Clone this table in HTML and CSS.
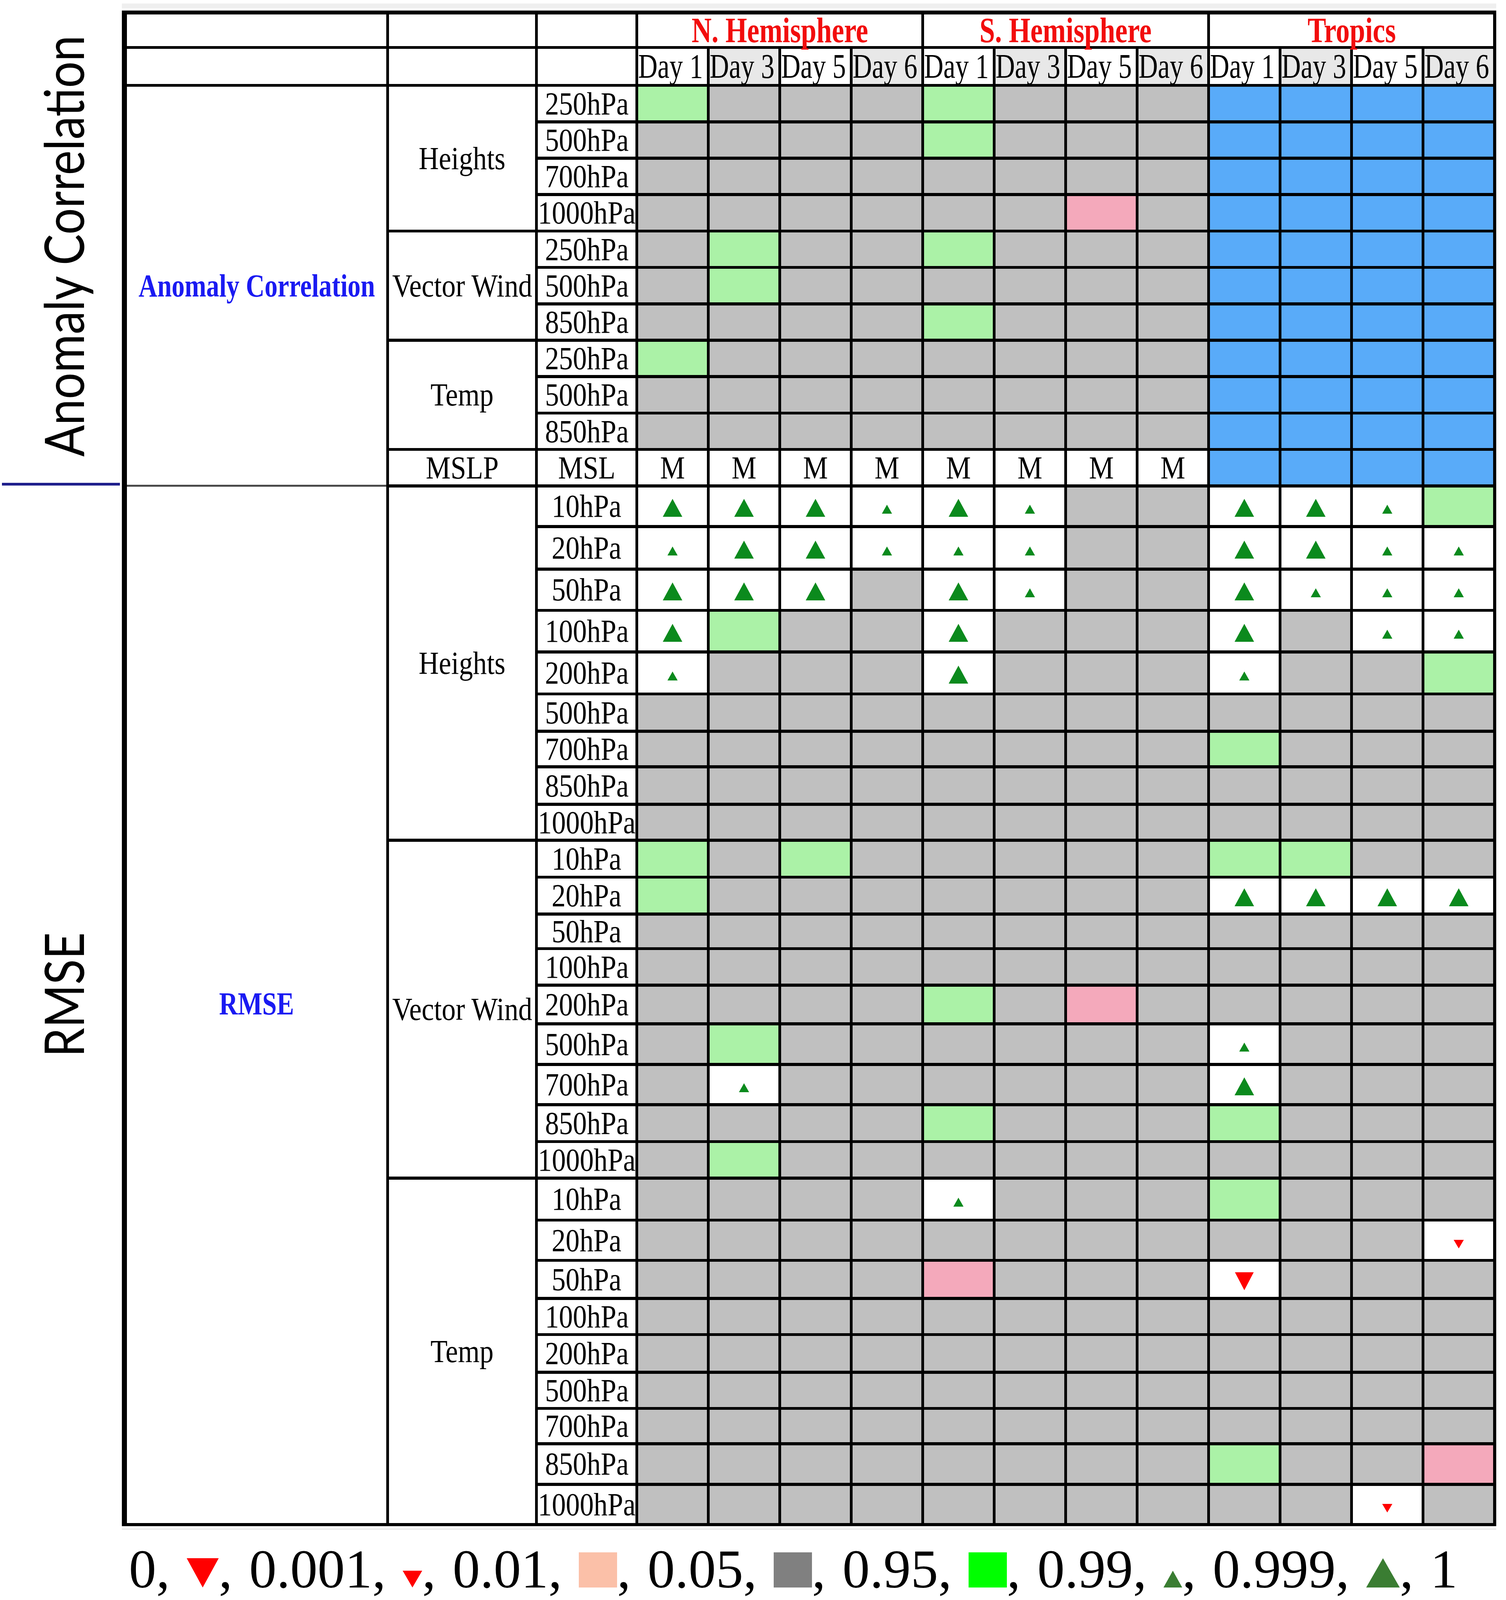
FILE: index.html
```html
<!DOCTYPE html>
<html lang="en">
<head>
<meta charset="utf-8">
<title>Anomaly Correlation and RMSE scorecard</title>
<link rel="stylesheet" href="styles.css">
</head>
<body>
<div class="frame">
<div class="page">
  <div class="side">
    <svg class="vsvg vsvg-ac" viewBox="0 0 312 1438" preserveAspectRatio="none">
      <text class="vtxt" x="-733" y="215" text-anchor="middle" transform="rotate(-90)">Anomaly Correlation</text>
    </svg>
    <div class="rule"></div>
    <svg class="vsvg vsvg-rm" viewBox="0 0 312 3034" preserveAspectRatio="none">
      <text class="vtxt" x="-1517" y="215" text-anchor="middle" transform="rotate(-90)">RMSE</text>
    </svg>
  </div>
  <div class="sheet">
    <div class="band"></div>
    <div class="tbl">
      <!-- header row 1 -->
      <div></div><div></div><div></div>
      <div class="grp"><span class="t">N. Hemisphere</span></div>
      <div class="grp"><span class="t">S. Hemisphere</span></div>
      <div class="grp"><span class="t">Tropics</span></div>
      <!-- header row 2 -->
      <div></div><div></div><div></div>
      <div class="day"><span class="t">Day 1</span></div>
      <div class="day dg"><span class="t">Day 3</span></div>
      <div class="day"><span class="t">Day 5</span></div>
      <div class="day dg"><span class="t">Day 6</span></div>
      <div class="day"><span class="t">Day 1</span></div>
      <div class="day dg"><span class="t">Day 3</span></div>
      <div class="day"><span class="t">Day 5</span></div>
      <div class="day dg"><span class="t">Day 6</span></div>
      <div class="day"><span class="t">Day 1</span></div>
      <div class="day dg"><span class="t">Day 3</span></div>
      <div class="day"><span class="t">Day 5</span></div>
      <div class="day dg"><span class="t">Day 6</span></div>

      <!-- Anomaly correlation -->
      <div class="cat cat-ac"><span class="t">Anomaly Correlation</span></div>
      <div class="var sp4"><span class="t">Heights</span></div>
      <div class="lv"><span class="t">250hPa</span></div>
      <div class="G"></div><div class="g"></div><div class="g"></div><div class="g"></div>
      <div class="G"></div><div class="g"></div><div class="g"></div><div class="g"></div>
      <div class="b"></div><div class="b"></div><div class="b"></div><div class="b"></div>

      <div class="lv"><span class="t">500hPa</span></div>
      <div class="g"></div><div class="g"></div><div class="g"></div><div class="g"></div>
      <div class="G"></div><div class="g"></div><div class="g"></div><div class="g"></div>
      <div class="b"></div><div class="b"></div><div class="b"></div><div class="b"></div>

      <div class="lv"><span class="t">700hPa</span></div>
      <div class="g"></div><div class="g"></div><div class="g"></div><div class="g"></div>
      <div class="g"></div><div class="g"></div><div class="g"></div><div class="g"></div>
      <div class="b"></div><div class="b"></div><div class="b"></div><div class="b"></div>

      <div class="lv"><span class="t">1000hPa</span></div>
      <div class="g"></div><div class="g"></div><div class="g"></div><div class="g"></div>
      <div class="g"></div><div class="g"></div><div class="p"></div><div class="g"></div>
      <div class="b"></div><div class="b"></div><div class="b"></div><div class="b"></div>

      <div class="var sp3"><span class="t">Vector Wind</span></div>
      <div class="lv"><span class="t">250hPa</span></div>
      <div class="g"></div><div class="G"></div><div class="g"></div><div class="g"></div>
      <div class="G"></div><div class="g"></div><div class="g"></div><div class="g"></div>
      <div class="b"></div><div class="b"></div><div class="b"></div><div class="b"></div>

      <div class="lv"><span class="t">500hPa</span></div>
      <div class="g"></div><div class="G"></div><div class="g"></div><div class="g"></div>
      <div class="g"></div><div class="g"></div><div class="g"></div><div class="g"></div>
      <div class="b"></div><div class="b"></div><div class="b"></div><div class="b"></div>

      <div class="lv"><span class="t">850hPa</span></div>
      <div class="g"></div><div class="g"></div><div class="g"></div><div class="g"></div>
      <div class="G"></div><div class="g"></div><div class="g"></div><div class="g"></div>
      <div class="b"></div><div class="b"></div><div class="b"></div><div class="b"></div>

      <div class="var sp3"><span class="t">Temp</span></div>
      <div class="lv"><span class="t">250hPa</span></div>
      <div class="G"></div><div class="g"></div><div class="g"></div><div class="g"></div>
      <div class="g"></div><div class="g"></div><div class="g"></div><div class="g"></div>
      <div class="b"></div><div class="b"></div><div class="b"></div><div class="b"></div>

      <div class="lv"><span class="t">500hPa</span></div>
      <div class="g"></div><div class="g"></div><div class="g"></div><div class="g"></div>
      <div class="g"></div><div class="g"></div><div class="g"></div><div class="g"></div>
      <div class="b"></div><div class="b"></div><div class="b"></div><div class="b"></div>

      <div class="lv"><span class="t">850hPa</span></div>
      <div class="g"></div><div class="g"></div><div class="g"></div><div class="g"></div>
      <div class="g"></div><div class="g"></div><div class="g"></div><div class="g"></div>
      <div class="b"></div><div class="b"></div><div class="b"></div><div class="b"></div>

      <div class="var"><span class="t">MSLP</span></div>
      <div class="lv"><span class="t">MSL</span></div>
      <div><span class="t">M</span></div><div><span class="t">M</span></div><div><span class="t">M</span></div><div><span class="t">M</span></div>
      <div><span class="t">M</span></div><div><span class="t">M</span></div><div><span class="t">M</span></div><div><span class="t">M</span></div>
      <div class="b"></div><div class="b"></div><div class="b"></div><div class="b"></div>

      <!-- RMSE -->
      <div class="cat cat-rm"><span class="t">RMSE</span></div>
      <div class="var sp9"><span class="t">Heights</span></div>
      <div class="lv"><span class="t">10hPa</span></div>
      <div><i class="up"></i></div><div><i class="up"></i></div><div><i class="up"></i></div><div><i class="up s"></i></div>
      <div><i class="up"></i></div><div><i class="up s"></i></div><div class="g"></div><div class="g"></div>
      <div><i class="up"></i></div><div><i class="up"></i></div><div><i class="up s"></i></div><div class="G"></div>

      <div class="lv"><span class="t">20hPa</span></div>
      <div><i class="up s"></i></div><div><i class="up"></i></div><div><i class="up"></i></div><div><i class="up s"></i></div>
      <div><i class="up s"></i></div><div><i class="up s"></i></div><div class="g"></div><div class="g"></div>
      <div><i class="up"></i></div><div><i class="up"></i></div><div><i class="up s"></i></div><div><i class="up s"></i></div>

      <div class="lv"><span class="t">50hPa</span></div>
      <div><i class="up"></i></div><div><i class="up"></i></div><div><i class="up"></i></div><div class="g"></div>
      <div><i class="up"></i></div><div><i class="up s"></i></div><div class="g"></div><div class="g"></div>
      <div><i class="up"></i></div><div><i class="up s"></i></div><div><i class="up s"></i></div><div><i class="up s"></i></div>

      <div class="lv"><span class="t">100hPa</span></div>
      <div><i class="up"></i></div><div class="G"></div><div class="g"></div><div class="g"></div>
      <div><i class="up"></i></div><div class="g"></div><div class="g"></div><div class="g"></div>
      <div><i class="up"></i></div><div class="g"></div><div><i class="up s"></i></div><div><i class="up s"></i></div>

      <div class="lv"><span class="t">200hPa</span></div>
      <div><i class="up s"></i></div><div class="g"></div><div class="g"></div><div class="g"></div>
      <div><i class="up"></i></div><div class="g"></div><div class="g"></div><div class="g"></div>
      <div><i class="up s"></i></div><div class="g"></div><div class="g"></div><div class="G"></div>

      <div class="lv"><span class="t">500hPa</span></div>
      <div class="g"></div><div class="g"></div><div class="g"></div><div class="g"></div>
      <div class="g"></div><div class="g"></div><div class="g"></div><div class="g"></div>
      <div class="g"></div><div class="g"></div><div class="g"></div><div class="g"></div>

      <div class="lv"><span class="t">700hPa</span></div>
      <div class="g"></div><div class="g"></div><div class="g"></div><div class="g"></div>
      <div class="g"></div><div class="g"></div><div class="g"></div><div class="g"></div>
      <div class="G"></div><div class="g"></div><div class="g"></div><div class="g"></div>

      <div class="lv"><span class="t">850hPa</span></div>
      <div class="g"></div><div class="g"></div><div class="g"></div><div class="g"></div>
      <div class="g"></div><div class="g"></div><div class="g"></div><div class="g"></div>
      <div class="g"></div><div class="g"></div><div class="g"></div><div class="g"></div>

      <div class="lv"><span class="t">1000hPa</span></div>
      <div class="g"></div><div class="g"></div><div class="g"></div><div class="g"></div>
      <div class="g"></div><div class="g"></div><div class="g"></div><div class="g"></div>
      <div class="g"></div><div class="g"></div><div class="g"></div><div class="g"></div>

      <div class="var sp9"><span class="t">Vector Wind</span></div>
      <div class="lv"><span class="t">10hPa</span></div>
      <div class="G"></div><div class="g"></div><div class="G"></div><div class="g"></div>
      <div class="g"></div><div class="g"></div><div class="g"></div><div class="g"></div>
      <div class="G"></div><div class="G"></div><div class="g"></div><div class="g"></div>

      <div class="lv"><span class="t">20hPa</span></div>
      <div class="G"></div><div class="g"></div><div class="g"></div><div class="g"></div>
      <div class="g"></div><div class="g"></div><div class="g"></div><div class="g"></div>
      <div><i class="up"></i></div><div><i class="up"></i></div><div><i class="up"></i></div><div><i class="up"></i></div>

      <div class="lv"><span class="t">50hPa</span></div>
      <div class="g"></div><div class="g"></div><div class="g"></div><div class="g"></div>
      <div class="g"></div><div class="g"></div><div class="g"></div><div class="g"></div>
      <div class="g"></div><div class="g"></div><div class="g"></div><div class="g"></div>

      <div class="lv"><span class="t">100hPa</span></div>
      <div class="g"></div><div class="g"></div><div class="g"></div><div class="g"></div>
      <div class="g"></div><div class="g"></div><div class="g"></div><div class="g"></div>
      <div class="g"></div><div class="g"></div><div class="g"></div><div class="g"></div>

      <div class="lv"><span class="t">200hPa</span></div>
      <div class="g"></div><div class="g"></div><div class="g"></div><div class="g"></div>
      <div class="G"></div><div class="g"></div><div class="p"></div><div class="g"></div>
      <div class="g"></div><div class="g"></div><div class="g"></div><div class="g"></div>

      <div class="lv"><span class="t">500hPa</span></div>
      <div class="g"></div><div class="G"></div><div class="g"></div><div class="g"></div>
      <div class="g"></div><div class="g"></div><div class="g"></div><div class="g"></div>
      <div><i class="up s"></i></div><div class="g"></div><div class="g"></div><div class="g"></div>

      <div class="lv"><span class="t">700hPa</span></div>
      <div class="g"></div><div><i class="up s"></i></div><div class="g"></div><div class="g"></div>
      <div class="g"></div><div class="g"></div><div class="g"></div><div class="g"></div>
      <div><i class="up"></i></div><div class="g"></div><div class="g"></div><div class="g"></div>

      <div class="lv"><span class="t">850hPa</span></div>
      <div class="g"></div><div class="g"></div><div class="g"></div><div class="g"></div>
      <div class="G"></div><div class="g"></div><div class="g"></div><div class="g"></div>
      <div class="G"></div><div class="g"></div><div class="g"></div><div class="g"></div>

      <div class="lv"><span class="t">1000hPa</span></div>
      <div class="g"></div><div class="G"></div><div class="g"></div><div class="g"></div>
      <div class="g"></div><div class="g"></div><div class="g"></div><div class="g"></div>
      <div class="g"></div><div class="g"></div><div class="g"></div><div class="g"></div>

      <div class="var sp9"><span class="t">Temp</span></div>
      <div class="lv"><span class="t">10hPa</span></div>
      <div class="g"></div><div class="g"></div><div class="g"></div><div class="g"></div>
      <div><i class="up s"></i></div><div class="g"></div><div class="g"></div><div class="g"></div>
      <div class="G"></div><div class="g"></div><div class="g"></div><div class="g"></div>

      <div class="lv"><span class="t">20hPa</span></div>
      <div class="g"></div><div class="g"></div><div class="g"></div><div class="g"></div>
      <div class="g"></div><div class="g"></div><div class="g"></div><div class="g"></div>
      <div class="g"></div><div class="g"></div><div class="g"></div><div><i class="dn s"></i></div>

      <div class="lv"><span class="t">50hPa</span></div>
      <div class="g"></div><div class="g"></div><div class="g"></div><div class="g"></div>
      <div class="p"></div><div class="g"></div><div class="g"></div><div class="g"></div>
      <div><i class="dn"></i></div><div class="g"></div><div class="g"></div><div class="g"></div>

      <div class="lv"><span class="t">100hPa</span></div>
      <div class="g"></div><div class="g"></div><div class="g"></div><div class="g"></div>
      <div class="g"></div><div class="g"></div><div class="g"></div><div class="g"></div>
      <div class="g"></div><div class="g"></div><div class="g"></div><div class="g"></div>

      <div class="lv"><span class="t">200hPa</span></div>
      <div class="g"></div><div class="g"></div><div class="g"></div><div class="g"></div>
      <div class="g"></div><div class="g"></div><div class="g"></div><div class="g"></div>
      <div class="g"></div><div class="g"></div><div class="g"></div><div class="g"></div>

      <div class="lv"><span class="t">500hPa</span></div>
      <div class="g"></div><div class="g"></div><div class="g"></div><div class="g"></div>
      <div class="g"></div><div class="g"></div><div class="g"></div><div class="g"></div>
      <div class="g"></div><div class="g"></div><div class="g"></div><div class="g"></div>

      <div class="lv"><span class="t">700hPa</span></div>
      <div class="g"></div><div class="g"></div><div class="g"></div><div class="g"></div>
      <div class="g"></div><div class="g"></div><div class="g"></div><div class="g"></div>
      <div class="g"></div><div class="g"></div><div class="g"></div><div class="g"></div>

      <div class="lv"><span class="t">850hPa</span></div>
      <div class="g"></div><div class="g"></div><div class="g"></div><div class="g"></div>
      <div class="g"></div><div class="g"></div><div class="g"></div><div class="g"></div>
      <div class="G"></div><div class="g"></div><div class="g"></div><div class="p"></div>

      <div class="lv"><span class="t">1000hPa</span></div>
      <div class="g"></div><div class="g"></div><div class="g"></div><div class="g"></div>
      <div class="g"></div><div class="g"></div><div class="g"></div><div class="g"></div>
      <div class="g"></div><div class="g"></div><div><i class="dn s"></i></div><div class="g"></div>
    </div>
    <div class="footline"></div>
  </div>
</div>
<div class="legend">0, <i class="lg dn-big"></i>, 0.001, <i class="lg dn-small"></i>, 0.01, <i class="lg sq peach"></i>, 0.05, <i class="lg sq gray"></i>, 0.95, <i class="lg sq lime"></i>, 0.99, <i class="lg up-small"></i>, 0.999, <i class="lg up-big"></i>, 1</div>
</div>
</body>
</html>
```
FILE: styles.css
```css
/* one vertical unit = 1/4767 of the window height, so the sheet fills the window */
:root {
  --v: calc(100vh / 4767);
}

html, body {
  margin: 0;
  padding: 0;
  background: #ffffff;
}

body {
  font-family: "Liberation Serif", "Times New Roman", serif;
  color: #000;
}

.frame {
  width: 3856px;
  height: 100vh;
  overflow: hidden;
}

.page {
  display: flex;
  align-items: flex-start;
}

/* left side rotated labels */
.side {
  width: 312px;
  flex: none;
  display: flex;
  flex-direction: column;
}

.vsvg {
  display: block;
  width: 312px;
  overflow: visible;
}

.vsvg-ac {
  height: calc(1438 * var(--v));
}

.vsvg-rm {
  height: calc(3034 * var(--v));
}

.vtxt {
  font-family: Lato, "Open Sans", sans-serif;
  font-size: 139px;
  fill: #000;
}

.rule {
  margin-left: 5px;
  width: 302px;
  height: calc(9 * var(--v));
  background: #1f1f8c;
}

/* table sheet */
.sheet {
  flex: none;
  padding-top: calc(10 * var(--v));
}

.band {
  height: calc(14 * var(--v));
  background: #efefef;
  margin-bottom: calc(8 * var(--v));
}

.footline {
  height: calc(3 * var(--v));
  margin-top: calc(8 * var(--v));
  background: #e6e6e6;
}

.tbl {
  display: grid;
  grid-template-columns: 664px 374px 250px repeat(12, 176px);
  grid-template-rows:
    calc(94 * var(--v)) calc(104 * var(--v))
    repeat(11, calc(99.5 * var(--v)))
    calc(112 * var(--v)) calc(118 * var(--v)) calc(114 * var(--v))
    calc(115 * var(--v)) calc(116 * var(--v)) calc(102 * var(--v))
    calc(97 * var(--v)) calc(103 * var(--v)) calc(98 * var(--v))
    calc(101 * var(--v)) calc(101 * var(--v)) calc(94 * var(--v))
    calc(100 * var(--v)) calc(106 * var(--v)) calc(112 * var(--v))
    calc(111 * var(--v)) calc(101 * var(--v)) calc(100 * var(--v))
    calc(116 * var(--v)) calc(111 * var(--v)) calc(104 * var(--v))
    calc(99 * var(--v)) calc(103 * var(--v)) calc(99 * var(--v))
    calc(96 * var(--v)) calc(112 * var(--v)) calc(111 * var(--v));
  column-gap: 7px;
  row-gap: calc(9 * var(--v));
  padding: calc(11 * var(--v)) 8px calc(9 * var(--v)) 13px;
  background: #000;
}

.tbl > div {
  background: #ffffff;
  display: flex;
  align-items: center;
  justify-content: center;
  min-width: 0;
  font-size: 83px;
  line-height: 0.9;
}

.t {
  display: inline-block;
  white-space: nowrap;
  transform: scaleX(0.86);
  transform-origin: center center;
}

/* group headers */
.tbl > .grp {
  grid-column: span 4;
  color: #f20d0d;
  font-weight: bold;
  font-size: 91px;
  line-height: 0.85;
}

.grp .t {
  transform: scaleX(0.78);
}

/* day headers */
.tbl > .day {
  justify-content: flex-start;
  font-size: 88px;
}

.tbl > .dg {
  background: #e8e8e8;
}

.day .t {
  transform: scaleX(0.78);
  transform-origin: left center;
}

/* category column */
.tbl > .cat {
  color: #1a1af2;
  font-weight: bold;
}

.cat .t {
  transform: scaleX(0.8);
}

.cat-ac {
  grid-row: span 11;
}

.tbl > .cat-rm {
  grid-row: span 27;
  margin-top: calc(-9 * var(--v));
  background:
    linear-gradient(#ffffff 0 1px, #4a4a4a 1px 6px, #ffffff 6px 8px) top / 100% 8px no-repeat,
    #ffffff;
}

.sp3 { grid-row: span 3; }
.sp4 { grid-row: span 4; }
.sp9 { grid-row: span 9; }

/* cell colours */
.tbl > .g { background: #c0c0c0; }
.tbl > .G { background: #abf2a7; }
.tbl > .p { background: #f4a9bb; }
.tbl > .b { background: #59abf9; }

/* significance triangles */
.up {
  display: block;
  width: 0;
  height: 0;
  border-left: 25px solid transparent;
  border-right: 25px solid transparent;
  border-bottom: calc(54 * var(--v)) solid #0b8a1d;
  margin-top: calc(10 * var(--v));
}

.up.s {
  border-left-width: 13px;
  border-right-width: 13px;
  border-bottom-width: calc(27 * var(--v));
  margin-top: calc(18 * var(--v));
}

.dn {
  display: block;
  width: 0;
  height: 0;
  border-left: 24px solid transparent;
  border-right: 24px solid transparent;
  border-top: calc(54 * var(--v)) solid #ff0000;
  margin-top: calc(12 * var(--v));
}

.dn.s {
  border-left-width: 13px;
  border-right-width: 13px;
  border-top-width: calc(26 * var(--v));
  margin-top: calc(24 * var(--v));
}

/* legend */
.legend {
  margin-top: calc(44 * var(--v));
  padding-left: 330px;
  font-family: "Liberation Serif", "Times New Roman", serif;
  font-size: 140px;
  word-spacing: 8px;
  line-height: calc(146 * var(--v));
  white-space: nowrap;
}

.lg {
  display: inline-block;
  vertical-align: baseline;
}

.dn-big {
  width: 0;
  height: 0;
  border-left: 41px solid transparent;
  border-right: 41px solid transparent;
  border-top: calc(88 * var(--v)) solid #ff0000;
}

.dn-small {
  width: 0;
  height: 0;
  border-left: 25px solid transparent;
  border-right: 25px solid transparent;
  border-top: calc(51 * var(--v)) solid #ff0000;
}

.up-small {
  width: 0;
  height: 0;
  border-left: 24px solid transparent;
  border-right: 24px solid transparent;
  border-bottom: calc(51 * var(--v)) solid #3a7d32;
}

.up-big {
  width: 0;
  height: 0;
  border-left: 43px solid transparent;
  border-right: 43px solid transparent;
  border-bottom: calc(88 * var(--v)) solid #3a7d32;
}

.sq {
  width: 98px;
  height: calc(104 * var(--v));
}

.peach { background: #fbc0a8; }
.gray { background: #808080; }
.lime { background: #00ff00; }
```
